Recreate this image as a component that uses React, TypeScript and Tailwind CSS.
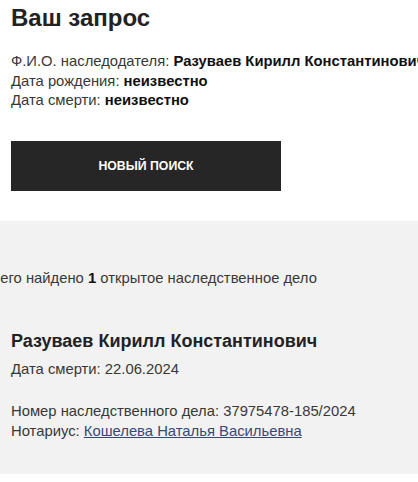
import React from "react";

const font = { fontFamily: '"Liberation Sans", Arial, sans-serif' };

export default function App() {
  return (
    <div className="w-[418px] h-[482px] overflow-hidden bg-white text-[#383838]" style={font}>
      {/* Request */}
      <div className="px-[11px] pt-1">
        <h1 className="text-[24px] leading-[28px] font-bold text-[#222]">Ваш запрос</h1>
        <div className="mt-5 text-[14.8px] leading-[19.6px] whitespace-nowrap">
          <div>
            Ф.И.О. наследодателя: <b className="text-[#111]">Разуваев Кирилл Константинович</b>
          </div>
          <div>
            Дата рождения: <b className="text-[#111]">неизвестно</b>
          </div>
          <div>
            Дата смерти: <b className="text-[#111]">неизвестно</b>
          </div>
        </div>
        <button className="mt-[30px] w-[270px] h-[50px] bg-[#262626] text-white text-[12.3px] font-bold uppercase">
          Новый поиск
        </button>
      </div>

      {/* Results */}
      <div className="mt-[30px] bg-[#f2f2f2] pt-[47px] pb-[33px]">
        <div className="-ml-[17px] text-[14.8px] leading-[20px] whitespace-nowrap">
          Всего найдено <b className="text-[#111]">1</b> открытое наследственное дело
        </div>
        <div className="px-[11px] mt-[42px]">
          <div className="text-[18px] leading-[22px] font-bold text-[#222]">
            Разуваев Кирилл Константинович
          </div>
          <div className="mt-[7px] text-[14.8px] leading-[20px]">Дата смерти: 22.06.2024</div>
          <div className="mt-[22px] text-[14.8px] leading-[20px]">
            Номер наследственного дела: 37975478-185/2024
          </div>
          <div className="text-[14.8px] leading-[20px]">
            Нотариус:{" "}
            <a href="#" className="text-[#34497a] underline">
              Кошелева Наталья Васильевна
            </a>
          </div>
        </div>
      </div>
    </div>
  );
}
